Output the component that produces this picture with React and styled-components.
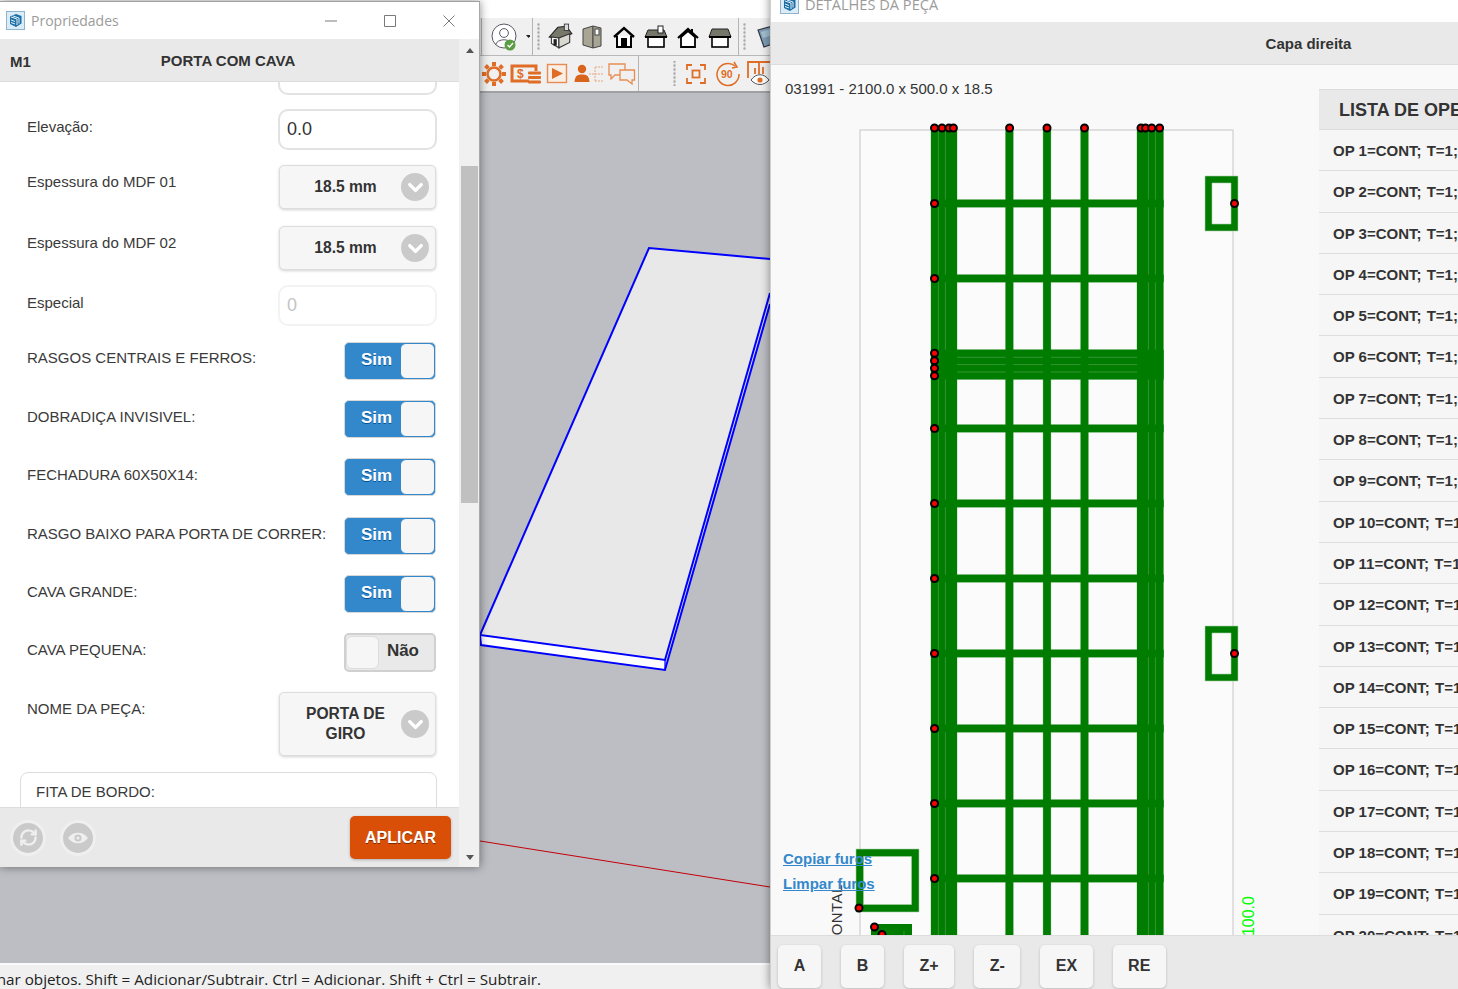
import React from 'react'
import styled, { createGlobalStyle } from 'styled-components'
import { ChevronDown, RefreshCw } from 'lucide-react'

const GlobalStyle = createGlobalStyle`
  html, body { margin: 0; padding: 0; background: #bdbec3; }
  * { box-sizing: border-box; }
  body { font-family: "Liberation Sans", Arial, sans-serif; color: #333; }
`

const Page = styled.div`
  position: relative;
  width: 1458px;
  height: 989px;
  overflow: hidden;
`

/* SketchUp behind the two windows */
const Desktop = styled.div`
  display: flex;
  flex-direction: column;
  width: 100%;
  height: 100%;
`
const TopBlank = styled.div`
  height: 18px;
  background: #fff;
`
const ToolRow = styled.div`
  display: flex;
  align-items: stretch;
  height: ${p => p.$h}px;
  padding-left: ${p => p.$left}px;
  background: #f0f0f0;
  border-bottom: ${p => p.$line};
`
const ToolSep = styled.div`
  width: 1px;
  margin: ${p => p.$m || '0'};
  background: #b4b4b4;
`
const ToolGrip = styled.div`
  width: 11px;
  margin: 5px 0;
  background-image: radial-gradient(#aaa 1px, transparent 1.2px);
  background-size: 3px 4px;
  background-repeat: repeat-y;
  background-position: center;
`
const ToolSpacer = styled.div`
  width: ${p => p.$w}px;
`
const ToolIcon = styled.div`
  display: flex;
  align-items: center;
  justify-content: center;
  width: ${p => p.$w || 32}px;
`
const Viewport = styled.div`
  flex: 1;
  background: #bdbec3;
  overflow: hidden;
  svg { display: block; }
`
const StatusBar = styled.div`
  height: 26px;
  overflow: hidden;
  background: #f0f0f0;
  border-top: 2px solid #fafafa;
  font-family: "Open Sans", sans-serif;
  font-size: 15.25px;
  line-height: 29px;
  color: #222;
  white-space: nowrap;
`
const StatusText = styled.div`
  margin-left: -53px;
`

/* floating windows */
const Win = styled.div`
  position: absolute;
  display: flex;
  flex-direction: column;
  background: #fff;
  box-shadow: 0 0 9px rgba(0, 0, 0, 0.45);
`
const PropsWin = styled(Win)`
  left: 0;
  top: 1px;
  width: 480px;
  height: 866px;
  border-top: 1px solid #a0a0a0;
  border-right: 1px solid #a8a8a8;
`
const DetailWin = styled(Win)`
  left: 770px;
  top: -14px;
  width: 1076px;
  height: 1003px;
  border-left: 1px solid #d0d0d0;
`
const TitleBar = styled.div`
  display: flex;
  align-items: center;
  flex: none;
  height: ${p => p.$h}px;
  padding-left: ${p => p.$pad}px;
  background: #fff;
`
const TitleText = styled.span`
  margin-left: 6px;
  font-family: "Open Sans", sans-serif;
  font-size: ${p => p.$size}px;
  color: #9b9b9b;
`
const WinControls = styled.div`
  display: flex;
  align-items: center;
  gap: 47px;
  margin-left: auto;
  margin-right: 24px;
`
const PropsBody = styled.div`
  display: flex;
  flex: 1;
  min-height: 0;
`
const PropsMain = styled.div`
  display: flex;
  flex-direction: column;
  flex: none;
  width: 459px;
`
const PropsHeader = styled.div`
  display: flex;
  align-items: center;
  flex: none;
  height: 43px;
  padding: 2px 0 0 10px;
  background: #e9e9e9;
  border-bottom: 1px solid #ddd;
  font-size: 15px;
  font-weight: bold;
`
const HeaderTitle = styled.span`
  margin-left: 130px;
  margin-top: -2px;
`
const Form = styled.div`
  flex: 1;
  min-height: 0;
  overflow: hidden;
  background: #fff;
`
const Row = styled.div`
  display: flex;
  justify-content: space-between;
  margin-top: ${p => p.$mt}px;
  padding: 0 22px 0 27px;
`
const Label = styled.div`
  padding-top: ${p => p.$pt || 8}px;
  font-size: 15px;
  line-height: 17px;
  color: #3a3a3a;
`
const TextInput = styled.div`
  width: 159px;
  height: 41px;
  padding-left: 7px;
  border: 2px solid ${p => (p.$off ? '#f3f3f3' : '#e2e2e2')};
  border-radius: 10px;
  background: #fff;
  font-size: 18px;
  line-height: 37px;
  color: ${p => (p.$off ? '#c4c4c4' : '#333')};
`
const Select = styled.div`
  position: relative;
  width: 157px;
  margin-right: 1px;
  padding: 11px 46px 11px 22px;
  border: 1px solid #ddd;
  border-radius: 5px;
  background: #f6f6f6;
  box-shadow: 0 1px 3px rgba(0, 0, 0, 0.18);
  font-size: 15.6px;
  font-weight: bold;
  line-height: 20px;
  text-align: center;
`
const SelectArrow = styled.span`
  position: absolute;
  top: 50%;
  right: 6px;
  display: flex;
  align-items: center;
  justify-content: center;
  width: 28px;
  height: 28px;
  margin-top: -14px;
  border-radius: 50%;
  background: #cacaca;
`
const Toggle = styled.div`
  display: flex;
  flex-direction: ${p => (p.$on ? 'row' : 'row-reverse')};
  align-items: center;
  justify-content: space-between;
  width: 92px;
  height: ${p => (p.$on ? 38 : 39)}px;
  margin-right: 1px;
  border: ${p => (p.$on ? '1px solid #d8d8d8' : '2px solid #d0d0d0')};
  border-radius: 5px;
  background: ${p => (p.$on ? '#3388cc' : '#e9e9e9')};
  font-size: 17px;
  font-weight: bold;
  color: ${p => (p.$on ? '#fff' : '#333')};
  text-shadow: ${p => (p.$on ? '0 1px 0 #005599' : 'none')};
`
const ToggleText = styled.span`
  margin: ${p => (p.$on ? '-3px 0 0 16px' : '-3px 15px 0 0')};
`
const ToggleKnob = styled.span`
  width: ${p => (p.$on ? 35 : 33)}px;
  height: ${p => (p.$on ? 36 : 33)}px;
  border: 1px solid ${p => (p.$on ? '#3388cc' : '#ddd')};
  border-radius: 6px;
  background: #f6f6f6;
`
const Fieldset = styled.div`
  height: 60px;
  margin: 16px 22px 0 20px;
  padding: 10px 15px;
  border: 1px solid #ddd;
  border-radius: 8px;
  font-size: 15px;
  line-height: 17px;
  color: #3a3a3a;
`
const PropsFooter = styled.div`
  display: flex;
  align-items: center;
  flex: none;
  height: 60px;
  padding-left: 10px;
  padding-right: 8px;
  background: #e9e9e9;
  border-top: 1px solid #ddd;
`
const RoundButton = styled.span`
  display: flex;
  align-items: center;
  justify-content: center;
  width: 36px;
  height: 36px;
  margin-right: 14px;
  border: 3px solid #efefef;
  border-radius: 50%;
  background: #cacaca;
`
const ApplyButton = styled.div`
  margin-left: auto;
  width: 101px;
  height: 43px;
  border-radius: 5px;
  background: #d94f07;
  box-shadow: 0 1px 3px rgba(0, 0, 0, 0.25);
  font-size: 16px;
  font-weight: bold;
  line-height: 43px;
  text-align: center;
  color: #fff;
  text-shadow: 0 1px 0 #7a2c00;
`
const ScrollBar = styled.div`
  display: flex;
  flex-direction: column;
  flex: 1;
  padding: 9px 1px 7px 2px;
  background: #f0f0f0;
`
const ScrollArrow = styled.div`
  align-self: center;
  width: 0;
  height: 0;
  border-left: 4.5px solid transparent;
  border-right: 4.5px solid transparent;
  ${p => (p.$down ? 'border-top: 5px solid #555;' : 'border-bottom: 5px solid #555;')}
  ${p => (p.$down ? 'margin-top: auto;' : '')}
`
const ScrollThumb = styled.div`
  height: 337px;
  margin-top: 113px;
  background: #c0c0c0;
`

/* detail window */
const DetailHeader = styled.div`
  flex: none;
  height: 43px;
  background: #e9e9e9;
  border-bottom: 1px solid #ddd;
  font-size: 15px;
  font-weight: bold;
  line-height: 44px;
  text-align: center;
`
const DetailBody = styled.div`
  display: flex;
  flex: none;
  height: 870px;
  background: #f9f9f9;
  overflow: hidden;
`
const DrawingPane = styled.div`
  position: relative;
  flex: none;
  width: 548px;
  svg { display: block; }
`
const PieceInfo = styled.div`
  position: absolute;
  left: 14px;
  top: 15px;
  font-size: 15px;
  line-height: 18px;
  color: #333;
`
const DrawingLink = styled.a`
  position: absolute;
  left: 12px;
  top: ${p => p.$top}px;
  font-size: 15px;
  font-weight: bold;
  line-height: 18px;
  color: #3388cc;
  text-decoration: underline;
`
const OpList = styled.div`
  flex: 1;
  padding-top: 24px;
`
const OpHeader = styled.div`
  height: 41px;
  padding-left: 20px;
  background: #e9e9e9;
  border-top: 1px solid #ddd;
  border-bottom: 1px solid #ddd;
  font-size: 18px;
  font-weight: bold;
  line-height: 41px;
`
const OpRow = styled.div`
  height: 41.3px;
  padding-left: 14px;
  background: #f6f6f6;
  border-bottom: 1px solid #ddd;
  font-size: 15px;
  font-weight: bold;
  line-height: 42px;
  white-space: nowrap;
`
const OpTerm = styled.span`
  margin-left: 1px;
`
const DetailFooter = styled.div`
  display: flex;
  flex: 1;
  gap: 20px;
  padding: 9px 0 0 7px;
  background: #e9e9e9;
  border-top: 1px solid #ddd;
`
const FooterButton = styled.div`
  min-width: 43px;
  height: 43px;
  padding: 0 15.5px;
  border-radius: 5px;
  background: #f6f6f6;
  box-shadow: 0 1px 3px rgba(0, 0, 0, 0.2);
  font-size: 16px;
  font-weight: bold;
  line-height: 42px;
  text-align: center;
`

const Logo = () => (
  <svg width='19' height='19' viewBox='0 0 19 19'>
    <rect x='0.5' y='0.5' width='18' height='18' fill='#dcecf7' stroke='#8fb4d0' />
    <path d='M4 5.5 L10 3 L15.5 5 L15.5 12.5 L10 16 L4 13 Z' fill='#1b6fa8' />
    <path d='M5 6 L11 8 L11 14 M7 5 L13 7 L13 12.5 M5 9 L9 10.5 M5 11.5 L9 13' stroke='#fff' strokeWidth='0.9' fill='none' />
  </svg>
)

const WinGlyph = ({ d }) => (
  <svg width='12' height='12' viewBox='0 0 12 12'>
    <path d={d} fill='none' stroke='#7a7a7a' strokeWidth='1' />
  </svg>
)

const Arrow = () => (
  <SelectArrow>
    <ChevronDown size={23} color='#fff' strokeWidth={3.6} />
  </SelectArrow>
)

const Switch = ({ on }) => (
  <Toggle $on={on}>
    <ToggleText $on={on}>{on ? 'Sim' : 'Não'}</ToggleText>
    <ToggleKnob $on={on} />
  </Toggle>
)

const houses = [
  <svg width='28' height='28' viewBox='0 0 26 26' key='h1'>
    <path d='M3 13 L11 4 L19 3 L24 10 L12 14 Z' fill='#77776a' stroke='#222' strokeWidth='1' />
    <rect x='17' y='1' width='4' height='6' fill='#ddd' stroke='#333' strokeWidth='0.8' />
    <path d='M5 13 L12 14 L12 23 L5 19 Z' fill='#fff' stroke='#333' />
    <path d='M12 14 L22 10 L22 18 L12 23 Z' fill='#d8d8d0' stroke='#333' />
    <rect x='7' y='15' width='3' height='6' fill='#222' />
  </svg>,
  <svg width='26' height='26' viewBox='0 0 26 26' key='h2'>
    <path d='M4 5 L14 2 L14 24 L4 21 Z' fill='#a8a594' stroke='#444' />
    <path d='M14 2 L22 4 L22 22 L14 24 Z' fill='#a8a594' stroke='#444' />
    <rect x='16' y='5' width='4' height='6' fill='#fff' stroke='#444' />
  </svg>,
  <svg width='26' height='26' viewBox='0 0 26 26' key='h3'>
    <path d='M3 13 L13 4 L23 13' fill='none' stroke='#000' strokeWidth='2.4' />
    <path d='M6 12 L6 23 L20 23 L20 12' fill='#fff' stroke='#000' strokeWidth='2' />
    <rect x='10' y='14' width='6' height='9' fill='#000' />
  </svg>,
  <svg width='26' height='26' viewBox='0 0 26 26' key='h4'>
    <path d='M5 6 L21 6 L24 13 L2 13 Z' fill='#77766a' stroke='#222' />
    <rect x='15' y='2' width='5' height='7' fill='#fff' stroke='#222' />
    <rect x='5' y='13' width='16' height='10' fill='#fff' stroke='#000' strokeWidth='1.6' />
    <path d='M2 13 L24 13' stroke='#000' strokeWidth='2' />
  </svg>,
  <svg width='26' height='26' viewBox='0 0 26 26' key='h5'>
    <path d='M3 14 L13 5 L23 14' fill='none' stroke='#000' strokeWidth='2.2' />
    <path d='M6 13 L13 7 L20 13 L20 23 L6 23 Z' fill='#fff' stroke='#000' strokeWidth='1.8' />
    <path d='M17 5 L17 9' stroke='#000' strokeWidth='2' />
  </svg>,
  <svg width='26' height='26' viewBox='0 0 26 26' key='h6'>
    <path d='M5 5 L21 5 L24 13 L2 13 Z' fill='#77766a' stroke='#222' />
    <rect x='5' y='13' width='16' height='10' fill='#fff' stroke='#000' strokeWidth='1.6' />
    <path d='M2 13 L24 13' stroke='#000' strokeWidth='2' />
  </svg>
]

const ORANGE = '#df6d26'

const orangeIcons = [
  <svg width='26' height='26' viewBox='0 0 26 26' key='gear'>
    <circle cx='13' cy='13' r='6.5' fill='none' stroke={ORANGE} strokeWidth='2.6' />
    {[0, 45, 90, 135, 180, 225, 270, 315].map(a => (
      <rect key={a} x='11' y='1' width='4' height='4' fill={ORANGE} transform={`rotate(${a} 13 13)`} />
    ))}
  </svg>,
  <svg width='32' height='22' viewBox='0 0 32 22' key='cash'>
    <path d='M19 18 L2 18 L2 3 L26 3 L26 8' fill='none' stroke={ORANGE} strokeWidth='3' />
    <text x='7' y='15' fontFamily='Liberation Sans' fontWeight='bold' fontSize='12' fill={ORANGE}>$</text>
    <rect x='18' y='8.5' width='13' height='3' rx='1' fill={ORANGE} />
    <rect x='18' y='13' width='13' height='3' rx='1' fill={ORANGE} />
    <rect x='18' y='17.5' width='13' height='3' rx='1' fill={ORANGE} />
  </svg>,
  <svg width='24' height='24' viewBox='0 0 24 24' key='play'>
    <rect x='1.5' y='2.5' width='19' height='18' fill='#fbeee5' stroke='#e78c52' strokeWidth='1.4' />
    <path d='M6 6 L17 11.5 L6 17 Z' fill={ORANGE} />
  </svg>,
  <svg width='32' height='24' viewBox='0 0 32 24' key='person'>
    <circle cx='8' cy='7' r='4.2' fill='#d9651d' />
    <path d='M0.5 20 C1 13 4 12.5 8 12.5 C12 12.5 15 13 15.5 20 Z' fill='#d9651d' />
    <path d='M15 12 L21 12 M21 5 L21 19 M21 5 L30 5 M21 12 L30 12 M21 19 L30 19' stroke='#e9a77c' strokeWidth='1' strokeDasharray='2 1' fill='none' />
  </svg>,
  <svg width='28' height='24' viewBox='0 0 28 24' key='chat'>
    <path d='M1 2 L17 2 L17 13 L7 13 L3 17 L3 13 L1 13 Z' fill='none' stroke='#e78c52' strokeWidth='1.3' />
    <path d='M12 8 L26.5 8 L26.5 18 L24 18 L24 22 L19 18 L12 18 Z' fill='#f0f0f0' stroke='#e78c52' strokeWidth='1.3' />
  </svg>
]

const viewIcons = [
  <svg width='22' height='22' viewBox='0 0 22 22' key='focus'>
    <path d='M2 7 L2 2 L7 2 M15 2 L20 2 L20 7 M20 15 L20 20 L15 20 M7 20 L2 20 L2 15' fill='none' stroke={ORANGE} strokeWidth='1.8' />
    <rect x='7.5' y='7.5' width='7' height='7' fill='none' stroke={ORANGE} strokeWidth='1.8' />
  </svg>,
  <svg width='26' height='26' viewBox='0 0 26 26' key='ninety'>
    <path d='M20 5 A11 11 0 1 0 24 13' fill='none' stroke={ORANGE} strokeWidth='1.5' />
    <path d='M19 1 L22 6 L17 7' fill='none' stroke={ORANGE} strokeWidth='1.5' />
    <text x='6' y='17' fontFamily='Liberation Sans' fontWeight='bold' fontSize='10.5' fill={ORANGE}>90</text>
  </svg>,
  <svg width='28' height='28' viewBox='0 0 28 28' key='eye'>
    <path d='M2 18 L2 2 L24 2' fill='none' stroke={ORANGE} strokeWidth='1.8' />
    <path d='M13 2 L13 14 M9 8 L9 14 M17 7 L17 14' stroke={ORANGE} strokeWidth='1.8' />
    <path d='M5 20 C10 13 18 13 23 20 C18 26 10 26 5 20 Z' fill='#fff' stroke='#555' strokeWidth='1' />
    <circle cx='14' cy='20' r='2.6' fill={ORANGE} />
  </svg>
]

/* the machining drawing: every number is a page coordinate */
const GREEN = '#007c00'
const PALE = '#3f9c3f'
const BOTTOM = 945
const columns = [[931, 26], [1005.6, 7.6], [1043.2, 7.6], [1080.7, 7.6], [1137, 26.4]]
const rails = [
  [199.7, 7.5], [274.7, 7.5], [349.7, 29.7], [424.7, 7.5], [499.7, 7.5],
  [574.7, 7.5], [649.7, 7.5], [724.7, 7.5], [799.7, 7.5], [874.7, 7.5]
]
const topHoles = [934.5, 942, 949, 953.4, 1009.6, 1047, 1084.5, 1141, 1145.5, 1151.7, 1159.6]
const sideHoles = [203.5, 278.5, 353.3, 360.8, 368.3, 375.8, 428.5, 503.5, 578.5, 653.5, 728.5, 803.5, 878.5]

const Frame = ({ x, y, w, h, t }) => (
  <path
    d={`M${x} ${y} h${w} v${h} h${-w} Z M${x + t} ${y + t} v${h - 2 * t} h${w - 2 * t} v${-(h - 2 * t)} Z`}
    fill={GREEN}
    stroke='#a9d0a9'
    strokeWidth='0.6'
  />
)

const Hole = ({ x, y }) => (
  <circle cx={x} cy={y} r='3.5' fill='#ff0000' stroke='#000' strokeWidth='2' />
)

const GreenBars = ({ halo }) => (
  <g fill={GREEN} stroke={halo ? '#b4d8b4' : 'none'} strokeWidth={halo ? 1 : 0}>
    {columns.map(([x, w]) => (
      <rect key={x} x={x} y='130' width={w} height={BOTTOM - 130} />
    ))}
    {rails.map(([y, h]) => (
      <rect key={y} x='931' y={y} width='232.4' height={h} />
    ))}
  </g>
)

const Drawing = () => (
  <svg width='548' height='870' viewBox='771 65 548 870'>
    <rect x='860' y='130' width='373' height='830' fill='#fbfbfb' stroke='#c6c6c6' strokeWidth='1' />
    <GreenBars halo />
    <GreenBars />
    {[938.4, 945.4, 1148.4, 1155.4].map(x => (
      <line key={x} x1={x} x2={x} y1='130' y2={BOTTOM} stroke={PALE} strokeWidth='0.8' />
    ))}
    {[357.3, 364.6, 372].map(y => (
      <line key={y} x1='957' x2='1137' y1={y} y2={y} stroke={PALE} strokeWidth='0.8' />
    ))}
    {columns.map(([x, w]) => rails.map(([y, h]) => (
      <rect key={`${x}-${y}`} x={x} y={y} width={w} height={h} fill={GREEN} />
    )))}

    <Frame x={1205} y={176} w={33} h={55} t={7} />
    <Frame x={1205} y={626} w={33} h={55} t={7} />
    <Frame x={856} y={849} w={63} h={63} t={7.5} />
    <rect x='871' y='924' width='41' height='30' fill={GREEN} />
    <line x1='904' x2='904' y1='931' y2='950' stroke={PALE} strokeWidth='0.8' />

    {topHoles.map(x => <Hole key={x} x={x} y={128} />)}
    {sideHoles.map(y => <Hole key={y} x={934.5} y={y} />)}
    <Hole x={1234.5} y={203.5} />
    <Hole x={1234.5} y={653.5} />
    <Hole x={859} y={908} />
    <Hole x={874.5} y={927} />
    <Hole x={882} y={934.5} />

    <text
      transform='translate(842 956) rotate(-90)'
      fontFamily='Liberation Sans'
      fontSize='15'
      fill='#333'
      letterSpacing='0.4'
    >FRONTAL</text>
    <text
      transform='translate(1254 945) rotate(-90)'
      fontFamily='Liberation Sans'
      fontSize='16'
      fill='#00ff00'
    >2100.0</text>
  </svg>
)

const operations = Array.from({ length: 20 }, (_, i) => i + 1)

const App = () => (
  <Page>
    <GlobalStyle />
    <Desktop>
      <TopBlank />
      <ToolRow $h={38} $left={481} $line='1px solid #b8b8b8'>
        <ToolSep />
        <ToolIcon $w={50}>
          <svg width='46' height='30' viewBox='-6 -1 46 30'>
            <circle cx='14' cy='13' r='12' fill='#fff' stroke='#5a5a66' strokeWidth='1' />
            <circle cx='14' cy='10' r='4.4' fill='none' stroke='#5a5a66' strokeWidth='1' />
            <path d='M5.5 22 C7 15 21 15 22.5 22' fill='none' stroke='#5a5a66' strokeWidth='1' />
            <circle cx='20' cy='22' r='5.5' fill='#5a9e44' />
            <path d='M17.5 22 L19.5 24 L23 20' fill='none' stroke='#fff' strokeWidth='1.3' />
            <path d='M36 12 L41 12 L38.5 15 Z' fill='#222' />
          </svg>
        </ToolIcon>
        <ToolSep />
        <ToolGrip />
        {houses.map(icon => <ToolIcon key={icon.key}>{icon}</ToolIcon>)}
        <ToolSep $m='0 0 0 2px' />
        <ToolGrip />
        <ToolIcon>
          <svg width='26' height='26' viewBox='0 0 26 26'>
            <path d='M5 6 L20 2 L25 18 L11 23 Z' fill='#7f9fb6' stroke='#334' strokeWidth='1.2' />
            <path d='M8 8 L18 5 L20 11 L10 14 Z' fill='#a5c0d2' />
          </svg>
        </ToolIcon>
      </ToolRow>
      <ToolRow $h={37} $left={478} $line='2px solid #a0a0a0'>
        {orangeIcons.map(icon => <ToolIcon key={icon.key}>{icon}</ToolIcon>)}
        <ToolSep />
        <ToolSpacer $w={30} />
        <ToolGrip />
        {viewIcons.map(icon => <ToolIcon key={icon.key}>{icon}</ToolIcon>)}
      </ToolRow>
      <Viewport>
        <svg width='1458' height='870' viewBox='0 93 1458 870'>
          <line x1='480' y1='841' x2='770' y2='887' stroke='#c4000a' strokeWidth='1' />
          <path d='M649 248 L770 259 L770 293 L665 660 L480 635 Z' fill='#e8e8e9' />
          <path d='M480 635 L665 660 L665 670 L481 645 Z' fill='#fff' />
          <path d='M665 660 L770 295 L770 305 L666 670 Z' fill='#dcdce0' />
          <g fill='none' stroke='#0000ff' strokeWidth='2'>
            <path d='M770 259 L649 248 L480 635 L665 660 L770 293' />
            <path d='M480 635 L481 645 L665 670 L770 304' />
            <path d='M665 660 L665 670' strokeWidth='1.2' />
          </g>
        </svg>
      </Viewport>
      <StatusBar>
        <StatusText>Selecionar objetos. Shift = Adicionar/Subtrair. Ctrl = Adicionar. Shift + Ctrl = Subtrair.</StatusText>
      </StatusBar>
    </Desktop>

    <PropsWin>
      <TitleBar $h={37} $pad={6}>
        <Logo />
        <TitleText $size={14}>Propriedades</TitleText>
        <WinControls>
          <WinGlyph d='M0 6 L12 6' />
          <WinGlyph d='M0.5 0.5 H11.5 V11.5 H0.5 Z' />
          <WinGlyph d='M0.5 0.5 L11.5 11.5 M11.5 0.5 L0.5 11.5' />
        </WinControls>
      </TitleBar>
      <PropsBody>
        <PropsMain>
          <PropsHeader>
            M1
            <HeaderTitle>PORTA COM CAVA</HeaderTitle>
          </PropsHeader>
          <Form>
            <Row $mt={-28}>
              <Label />
              <TextInput />
            </Row>
            <Row $mt={14}>
              <Label $pt={9}>Elevação:</Label>
              <TextInput>0.0</TextInput>
            </Row>
            <Row $mt={15}>
              <Label>Espessura do MDF 01</Label>
              <Select>18.5 mm<Arrow /></Select>
            </Row>
            <Row $mt={17}>
              <Label>Espessura do MDF 02</Label>
              <Select>18.5 mm<Arrow /></Select>
            </Row>
            <Row $mt={15}>
              <Label $pt={9}>Especial</Label>
              <TextInput $off>0</TextInput>
            </Row>
            <Row $mt={16}>
              <Label $pt={7}>RASGOS CENTRAIS E FERROS:</Label>
              <Switch on />
            </Row>
            <Row $mt={20}>
              <Label>DOBRADIÇA INVISIVEL:</Label>
              <Switch on />
            </Row>
            <Row $mt={20}>
              <Label>FECHADURA 60X50X14:</Label>
              <Switch on />
            </Row>
            <Row $mt={21}>
              <Label>RASGO BAIXO PARA PORTA DE CORRER:</Label>
              <Switch on />
            </Row>
            <Row $mt={20}>
              <Label>CAVA GRANDE:</Label>
              <Switch on />
            </Row>
            <Row $mt={20}>
              <Label>CAVA PEQUENA:</Label>
              <Switch />
            </Row>
            <Row $mt={20}>
              <Label>NOME DA PEÇA:</Label>
              <Select>PORTA DE GIRO<Arrow /></Select>
            </Row>
            <Fieldset>FITA DE BORDO:</Fieldset>
          </Form>
          <PropsFooter>
            <RoundButton>
              <RefreshCw size={19} color='#efefef' strokeWidth={3} />
            </RoundButton>
            <RoundButton>
              <svg width='22' height='14' viewBox='0 0 22 14'>
                <path d='M1 7 C6 0 16 0 21 7 C16 14 6 14 1 7 Z' fill='#efefef' />
                <circle cx='11' cy='7' r='3.6' fill='#cacaca' />
                <circle cx='11' cy='7' r='1.6' fill='#efefef' />
              </svg>
            </RoundButton>
            <ApplyButton>APLICAR</ApplyButton>
          </PropsFooter>
        </PropsMain>
        <ScrollBar>
          <ScrollArrow />
          <ScrollThumb />
          <ScrollArrow $down />
        </ScrollBar>
      </PropsBody>
    </PropsWin>

    <DetailWin>
      <TitleBar $h={36} $pad={9}>
        <Logo />
        <TitleText $size={14.6}>DETALHES DA PEÇA</TitleText>
      </TitleBar>
      <DetailHeader>Capa direita</DetailHeader>
      <DetailBody>
        <DrawingPane>
          <Drawing />
          <PieceInfo>031991 - 2100.0 x 500.0 x 18.5</PieceInfo>
          <DrawingLink $top={785}>Copiar furos</DrawingLink>
          <DrawingLink $top={810}>Limpar furos</DrawingLink>
        </DrawingPane>
        <OpList>
          <OpHeader>LISTA DE OPERAÇÕES</OpHeader>
          {operations.map(n => (
            <OpRow key={n}>OP {n}=CONT; <OpTerm>T=1;</OpTerm></OpRow>
          ))}
        </OpList>
      </DetailBody>
      <DetailFooter>
        {['A', 'B', 'Z+', 'Z-', 'EX', 'RE'].map(name => (
          <FooterButton key={name}>{name}</FooterButton>
        ))}
      </DetailFooter>
    </DetailWin>
  </Page>
)

export default App
